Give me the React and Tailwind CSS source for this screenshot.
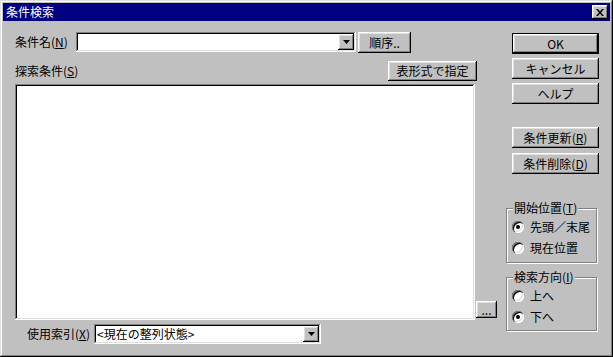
const raised =
  "shadow-[inset_-1px_-1px_#000,inset_1px_1px_#fff,inset_-2px_-2px_#808080,inset_2px_2px_#dfdfdf]";
const sunken =
  "shadow-[inset_-1px_-1px_#fff,inset_1px_1px_#808080,inset_-2px_-2px_#dfdfdf,inset_2px_2px_#000]";

const Key = ({ k }) => (
  <span>
    (<span className="underline underline-offset-[1px]">{k}</span>)
  </span>
);

const Button = ({ className = "", children }) => (
  <div
    className={`flex items-center justify-center bg-[#c0c0c0] text-[12px] leading-none text-black ${raised} ${className}`}
  >
    {children}
  </div>
);

const Combo = ({ className = "", value = "" }) => (
  <div className={`flex items-center bg-white p-[2px] ${sunken} ${className}`}>
    <div className="flex-1 whitespace-nowrap pl-[1px] text-[12px] leading-[14px]">{value}</div>
    <div className={`flex h-[16px] w-[16px] shrink-0 items-center justify-center bg-[#c0c0c0] ${raised}`}>
      <svg width="7" height="4" viewBox="0 0 7 4">
        <path d="M0 0h7L3.5 4z" fill="#000" />
      </svg>
    </div>
  </div>
);

const Radio = ({ checked, label }) => (
  <div className="flex items-center">
    <div className="relative h-[12px] w-[12px] rounded-full bg-white shadow-[inset_1px_1px_#808080,inset_2px_2px_#000,inset_-1px_-1px_#fff,inset_-2px_-2px_#dfdfdf]">
      {checked && <div className="absolute left-[4px] top-[4px] h-[4px] w-[4px] rounded-full bg-black" />}
    </div>
    <span className="ml-[6px] text-[12px] leading-none">{label}</span>
  </div>
);

const Group = ({ title, className = "", children }) => (
  <div
    className={`relative w-[91px] border border-[#808080] shadow-[1px_1px_0_#fff,inset_1px_1px_0_#fff] ${className}`}
  >
    <div className="absolute left-[6px] top-[-7px] bg-[#c0c0c0] px-[1px] text-[12px] leading-[12px]">
      {title}
    </div>
    <div className="flex flex-col gap-[9px] pl-[5px] pt-[12px]">{children}</div>
  </div>
);

export default function App() {
  return (
    <div className="font-['Noto_Sans_CJK_JP','Noto_Sans_CJK_SC',sans-serif] text-black">
      <div className="h-[357px] w-[613px] bg-[#c0c0c0] p-[3px] shadow-[inset_-1px_-1px_#000,inset_1px_1px_#dfdfdf,inset_-2px_-2px_#808080,inset_2px_2px_#fff]">
        <div className="flex h-[18px] items-center justify-between bg-[#000080] pl-[3px] pr-[2px]">
          <span className="text-[12px] leading-none text-white">条件検索</span>
          <div className={`flex h-[14px] w-[16px] items-center justify-center bg-[#c0c0c0] ${raised}`}>
            <svg width="8" height="7" viewBox="0 0 8 7">
              <path d="M0 0h2l2 2.5L6 0h2L5 3.5 8 7H6L4 4.5 2 7H0l3-3.5z" fill="#000" />
            </svg>
          </div>
        </div>

        <div className="flex">
          <div className="ml-[12px] flex w-[482px] shrink-0 flex-col">
            <div className="mt-[11px] flex h-[21px] items-start">
              <div className="flex h-[20px] w-[61px] items-center text-[12px] leading-none">
                条件名<Key k="N" />
              </div>
              <Combo className="h-[20px] w-[280px]" />
              <Button className="ml-[2px] h-[21px] w-[53px]">順序..</Button>
            </div>

            <div className="mt-[8px] flex h-[20px] w-[462px] items-center justify-between">
              <div className="text-[12px] leading-none">
                探索条件<Key k="S" />
              </div>
              <Button className="h-[20px] w-[89px]">表形式で指定</Button>
            </div>

            <div className="mt-[3px] flex items-end">
              <div className={`h-[236px] w-[460px] bg-white ${sunken}`} />
              <Button className="mb-[2px] ml-[1px] h-[17px] w-[21px] text-[9px]">...</Button>
            </div>

            <div className="mt-[4px] flex items-center pl-[12px]">
              <div className="w-[67px] text-[12px] leading-none">
                使用索引<Key k="X" />
              </div>
              <Combo className="h-[20px] w-[227px]" value="<現在の整列状態>" />
            </div>
          </div>

          <div className="ml-[9px] flex w-[93px] shrink-0 flex-col">
            <div className="ml-[6px] mt-[12px] flex h-[21px] w-[87px] border border-black">
              <Button className="h-full w-full">OK</Button>
            </div>
            <Button className="ml-[6px] mt-[4px] h-[21px] w-[87px]">キャンセル</Button>
            <Button className="ml-[6px] mt-[4px] h-[21px] w-[87px]">ヘルプ</Button>
            <Button className="ml-[6px] mt-[23px] h-[21px] w-[87px]">
              条件更新<Key k="R" />
            </Button>
            <Button className="ml-[6px] mt-[5px] h-[21px] w-[87px]">
              条件削除<Key k="D" />
            </Button>

            <Group title={<>開始位置<Key k="T" /></>} className="mt-[34px] h-[55px]">
              <Radio checked label="先頭／末尾" />
              <Radio label="現在位置" />
            </Group>
            <Group title={<>検索方向<Key k="I" /></>} className="mt-[14px] h-[54px]">
              <Radio label="上へ" />
              <Radio checked label="下へ" />
            </Group>
          </div>
        </div>
      </div>
    </div>
  );
}
